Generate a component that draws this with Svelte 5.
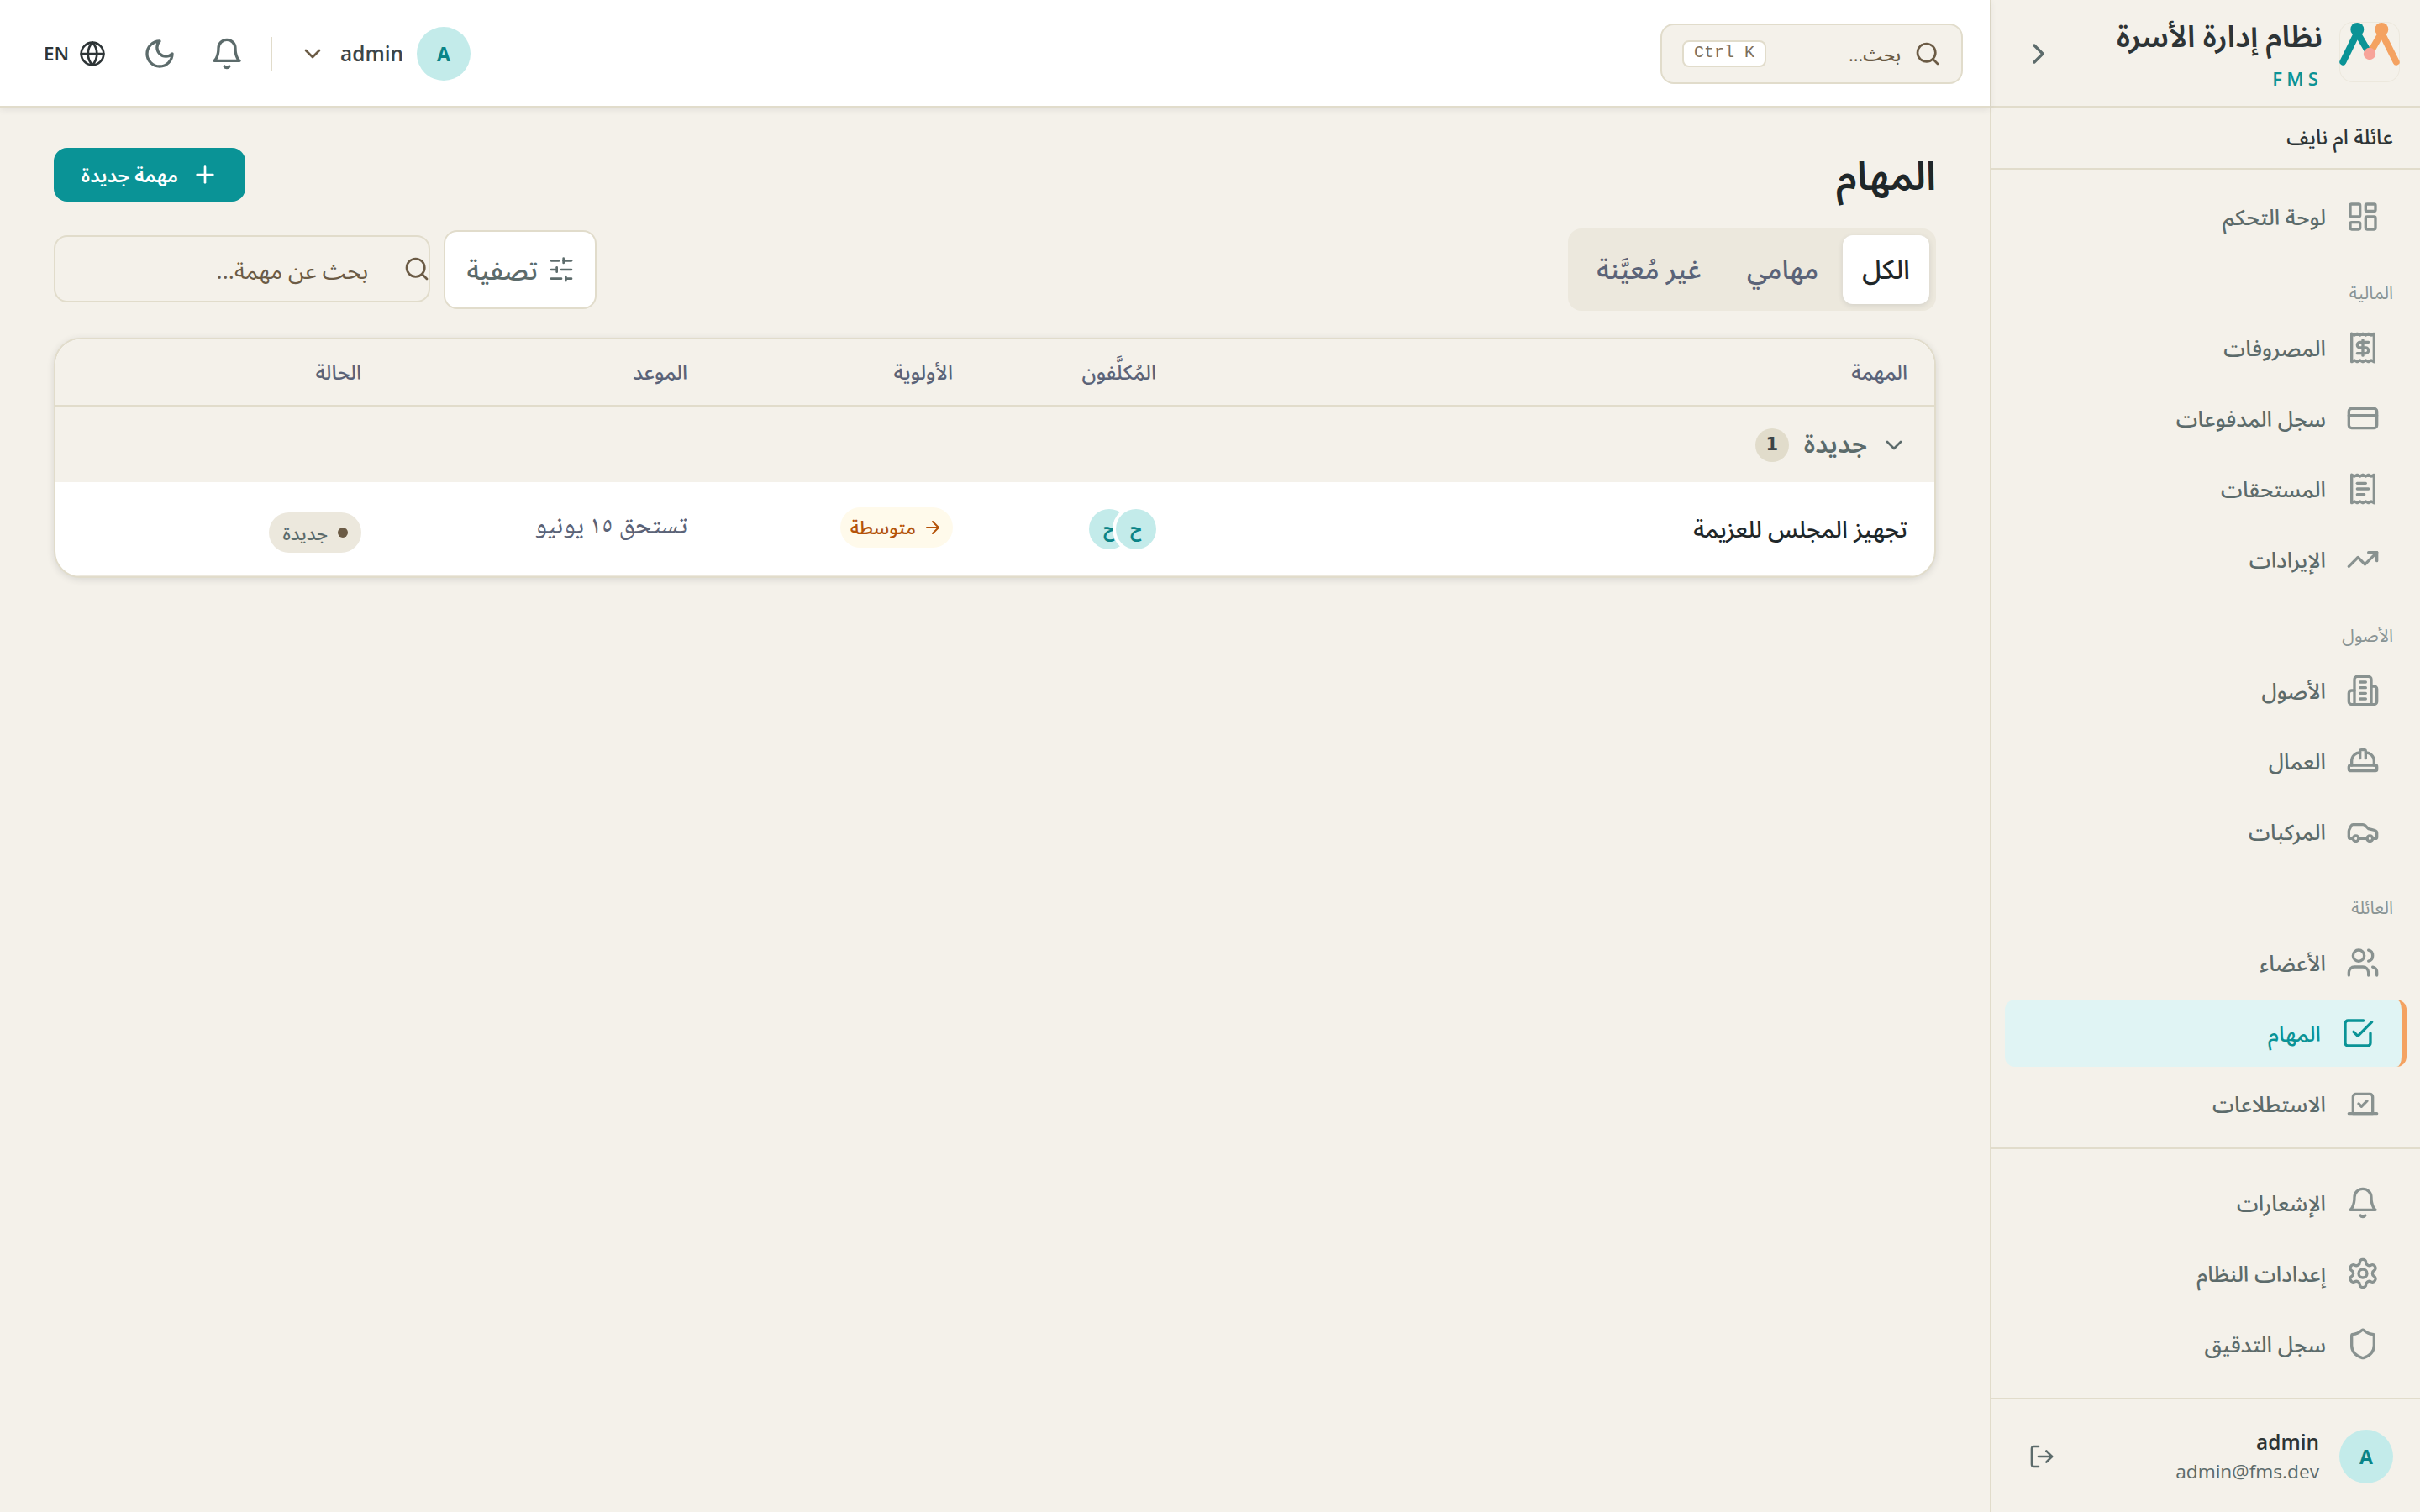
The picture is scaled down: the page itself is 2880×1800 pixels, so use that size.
<script lang="ts">
  const icons: Record<string, string> = {
    dashboard: '<rect width="7" height="9" x="3" y="3" rx="1"/><rect width="7" height="5" x="14" y="3" rx="1"/><rect width="7" height="9" x="14" y="12" rx="1"/><rect width="7" height="5" x="3" y="16" rx="1"/>',
    expenses: '<path d="M4 2v20l2-1 2 1 2-1 2 1 2-1 2 1 2-1 2 1V2l-2 1-2-1-2 1-2-1-2 1-2-1-2 1Z"/><path d="M16 8h-6a2 2 0 1 0 0 4h4a2 2 0 1 1 0 4H8"/><path d="M12 17.5v-11"/>',
    card: '<rect width="20" height="14" x="2" y="5" rx="2"/><path d="M2 10h20"/>',
    dues: '<path d="M4 2v20l2-1 2 1 2-1 2 1 2-1 2 1 2-1 2 1V2l-2 1-2-1-2 1-2-1-2 1-2-1-2 1Z"/><path d="M14 8H8"/><path d="M16 12H8"/><path d="M13 16H8"/>',
    trending: '<path d="m22 7-8.5 8.5-5-5L2 17"/><path d="M16 7h6v6"/>',
    building: '<path d="M6 22V4a2 2 0 0 1 2-2h8a2 2 0 0 1 2 2v18Z"/><path d="M6 12H4a2 2 0 0 0-2 2v6a2 2 0 0 0 2 2h2"/><path d="M18 9h2a2 2 0 0 1 2 2v9a2 2 0 0 1-2 2h-2"/><path d="M10 6h4"/><path d="M10 10h4"/><path d="M10 14h4"/><path d="M10 18h4"/>',
    hardhat: '<path d="M2 18a1 1 0 0 0 1 1h18a1 1 0 0 0 1-1v-2a1 1 0 0 0-1-1H3a1 1 0 0 0-1 1v2z"/><path d="M10 10V5a1 1 0 0 1 1-1h2a1 1 0 0 1 1 1v5"/><path d="M4 15v-3a6 6 0 0 1 6-6"/><path d="M14 6a6 6 0 0 1 6 6v3"/>',
    car: '<path d="M19 17h2c.6 0 1-.4 1-1v-3c0-.9-.7-1.7-1.5-1.9C18.7 10.6 16 10 16 10s-1.3-1.4-2.2-2.3c-.5-.4-1.1-.7-1.8-.7H5c-.6 0-1.1.4-1.4.9l-1.4 2.9A3.7 3.7 0 0 0 2 12v4c0 .6.4 1 1 1h2"/><circle cx="7" cy="17" r="2"/><path d="M9 17h6"/><circle cx="17" cy="17" r="2"/>',
    users: '<path d="M16 21v-2a4 4 0 0 0-4-4H6a4 4 0 0 0-4 4v2"/><circle cx="9" cy="7" r="4"/><path d="M22 21v-2a4 4 0 0 0-3-3.87"/><path d="M16 3.13a4 4 0 0 1 0 7.75"/>',
    tasks: '<path d="m9 11 3 3L22 4"/><path d="M21 12v7a2 2 0 0 1-2 2H5a2 2 0 0 1-2-2V5a2 2 0 0 1 2-2h11"/>',
    vote: '<path d="m9 12 2 2 4-4"/><path d="M5 7c0-1.1.9-2 2-2h10a2 2 0 0 1 2 2v12H5V7Z"/><path d="M22 19H2"/>',
    bell: '<path d="M6 8a6 6 0 0 1 12 0c0 7 3 9 3 9H3s3-2 3-9"/><path d="M10.3 21a1.94 1.94 0 0 0 3.4 0"/>',
    settings: '<path d="M12.22 2h-.44a2 2 0 0 0-2 2v.18a2 2 0 0 1-1 1.73l-.43.25a2 2 0 0 1-2 0l-.15-.08a2 2 0 0 0-2.73.73l-.22.38a2 2 0 0 0 .73 2.73l.15.1a2 2 0 0 1 1 1.72v.51a2 2 0 0 1-1 1.74l-.15.09a2 2 0 0 0-.73 2.73l.22.38a2 2 0 0 0 2.73.73l.15-.08a2 2 0 0 1 2 0l.43.25a2 2 0 0 1 1 1.73V20a2 2 0 0 0 2 2h.44a2 2 0 0 0 2-2v-.18a2 2 0 0 1 1-1.73l.43-.25a2 2 0 0 1 2 0l.15.08a2 2 0 0 0 2.73-.73l.22-.39a2 2 0 0 0-.73-2.73l-.15-.08a2 2 0 0 1-1-1.74v-.5a2 2 0 0 1 1-1.74l.15-.09a2 2 0 0 0 .73-2.73l-.22-.38a2 2 0 0 0-2.73-.73l-.15.08a2 2 0 0 1-2 0l-.43-.25a2 2 0 0 1-1-1.73V4a2 2 0 0 0-2-2z"/><circle cx="12" cy="12" r="3"/>',
    shield: '<path d="M20 13c0 5-3.5 7.5-7.66 8.95a1 1 0 0 1-.67-.01C7.5 20.5 4 18 4 13V6a1 1 0 0 1 1-1c2 0 4.5-1.2 6.24-2.72a1.17 1.17 0 0 1 1.52 0C14.51 3.81 17 5 19 5a1 1 0 0 1 1 1z"/>',
    logout: '<path d="M9 21H5a2 2 0 0 1-2-2V5a2 2 0 0 1 2-2h4"/><path d="m16 17 5-5-5-5"/><path d="M21 12H9"/>',
    search: '<circle cx="11" cy="11" r="8"/><path d="m21 21-4.3-4.3"/>',
    moon: '<path d="M12 3a6 6 0 0 0 9 9 9 9 0 1 1-9-9Z"/>',
    globe: '<circle cx="12" cy="12" r="10"/><path d="M12 2a14.5 14.5 0 0 0 0 20 14.5 14.5 0 0 0 0-20"/><path d="M2 12h20"/>',
    plus: '<path d="M5 12h14"/><path d="M12 5v14"/>',
    sliders: '<path d="M21 4h-7"/><path d="M10 4H3"/><path d="M21 12h-9"/><path d="M8 12H3"/><path d="M21 20h-5"/><path d="M12 20H3"/><path d="M14 2v4"/><path d="M8 10v4"/><path d="M16 18v4"/>',
    down: '<path d="m6 9 6 6 6-6"/>',
    right: '<path d="m9 18 6-6-6-6"/>',
    arrow: '<path d="M5 12h14"/><path d="m12 5 7 7-7 7"/>',
  };

  const groups = [
    { title: "", items: [{ icon: "dashboard", label: "لوحة التحكم" }] },
    {
      title: "المالية",
      items: [
        { icon: "expenses", label: "المصروفات" },
        { icon: "card", label: "سجل المدفوعات" },
        { icon: "dues", label: "المستحقات" },
        { icon: "trending", label: "الإيرادات" },
      ],
    },
    {
      title: "الأصول",
      items: [
        { icon: "building", label: "الأصول" },
        { icon: "hardhat", label: "العمال" },
        { icon: "car", label: "المركبات" },
      ],
    },
    {
      title: "العائلة",
      items: [
        { icon: "users", label: "الأعضاء" },
        { icon: "tasks", label: "المهام" },
        { icon: "vote", label: "الاستطلاعات" },
      ],
    },
  ];

  const systemItems = [
    { icon: "bell", label: "الإشعارات" },
    { icon: "settings", label: "إعدادات النظام" },
    { icon: "shield", label: "سجل التدقيق" },
  ];

  const tabs = ["الكل", "مهامي", "غير مُعيَّنة"];
  const columns = ["المهمة", "المُكلَّفون", "الأولوية", "الموعد", "الحالة"];
  const tasks = [
    { title: "تجهيز المجلس للعزيمة", people: ["ح", "ح"], priority: "متوسطة", due: "تستحق ١٥ يونيو", status: "جديدة" },
  ];

  let active = $state("المهام");
  let tab = $state("الكل");
  let open = $state(true);
</script>

{#snippet icon(name: string, size: number)}
  <svg class="icon" width={size} height={size} viewBox="0 0 24 24">{@html icons[name]}</svg>
{/snippet}

{#snippet navItem(item: { icon: string; label: string })}
  <button class="nav-item" class:active={active === item.label} onclick={() => (active = item.label)}>
    {@render icon(item.icon, 40)}
    <span class="t">{item.label}</span>
  </button>
{/snippet}

<div class="app" dir="rtl">
  <aside class="sidebar">
    <div class="brand">
      <div class="logo">
        <svg width="72" height="72" viewBox="0 0 72 72">
          <path class="leg teal" d="M4.3 47.7 21.3 13 36 38" />
          <path class="leg orange" d="M67.7 47.7 50.3 13 36 38" />
          <circle class="head-teal" cx="21.3" cy="9" r="8" />
          <circle class="head-orange" cx="50.3" cy="9" r="8" />
          <circle class="joint" cx="36" cy="38" r="7.2" />
        </svg>
      </div>
      <div class="brand-text">
        <span class="brand-name t">نظام إدارة الأسرة</span>
        <span class="brand-sub">FMS</span>
      </div>
      <button class="collapse">{@render icon("right", 40)}</button>
    </div>

    <div class="family"><span class="t">عائلة ام نايف</span></div>

    <nav class="nav">
      {#each groups as g}
        {#if g.title}
          <div class="nav-title"><span class="t">{g.title}</span></div>
        {/if}
        <div class="nav-group">
          {#each g.items as item}
            {@render navItem(item)}
          {/each}
        </div>
      {/each}
    </nav>

    <div class="nav-system">
      <div class="nav-group">
        {#each systemItems as item}
          {@render navItem(item)}
        {/each}
      </div>
    </div>

    <div class="account">
      <span class="avatar">A</span>
      <div class="account-text">
        <span class="account-name">admin</span>
        <span class="account-mail">admin@fms.dev</span>
      </div>
      <button class="logout">{@render icon("logout", 32)}</button>
    </div>
  </aside>

  <div class="main">
    <header class="topbar">
      <button class="search">
        {@render icon("search", 32)}
        <span class="search-label t">بحث...</span>
        <kbd dir="ltr">Ctrl K</kbd>
      </button>
      <div class="tools">
        <button class="user">
          <span class="avatar">A</span>
          <span class="user-name">admin</span>
          {@render icon("down", 32)}
        </button>
        <span class="sep"></span>
        <button class="tool">{@render icon("bell", 40)}</button>
        <button class="tool">{@render icon("moon", 40)}</button>
        <button class="lang">
          {@render icon("globe", 32)}
          <span>EN</span>
        </button>
      </div>
    </header>

    <main class="page">
      <div class="page-head">
        <h1><span class="t">المهام</span></h1>
        <button class="btn-new">
          {@render icon("plus", 32)}
          <span class="t">مهمة جديدة</span>
        </button>
      </div>

      <div class="filters">
        <div class="tabs">
          {#each tabs as name}
            <button class="tab" class:selected={tab === name} onclick={() => (tab = name)}><span class="t">{name}</span></button>
          {/each}
        </div>
        <div class="filters-end">
          <button class="btn-filter">
            {@render icon("sliders", 32)}
            <span class="t">تصفية</span>
          </button>
          <label class="find">
            {@render icon("search", 32)}
            <span class="find-hint t">بحث عن مهمة...</span>
          </label>
        </div>
      </div>

      <section class="table">
        <div class="row head">
          {#each columns as c}
            <div class="cell"><span class="t">{c}</span></div>
          {/each}
        </div>
        <button class="group" onclick={() => (open = !open)}>
          {@render icon("down", 32)}
          <span class="group-name t">جديدة</span>
          <span class="count">{tasks.length}</span>
        </button>
        {#if open}
          {#each tasks as task}
            <div class="row task">
              <div class="cell"><span class="task-title t">{task.title}</span></div>
              <div class="cell people">
                {#each task.people as p}
                  <span class="person"><span class="t">{p}</span></span>
                {/each}
              </div>
              <div class="cell">
                <span class="priority">{@render icon("arrow", 24)}<span class="t">{task.priority}</span></span>
              </div>
              <div class="cell"><span class="due t">{task.due}</span></div>
              <div class="cell">
                <span class="status"><i class="dot"></i><span class="t">{task.status}</span></span>
              </div>
            </div>
          {/each}
        {/if}
      </section>
    </main>
  </div>
</div>

<style>
  :global(body) { background: #f4f1ea; }
  .app {
    --sand: #f4f1ea;
    --line: #e1dccb;
    --teal: #0a9396;
    --ink: #2d3436;
    --muted: #5c6b6b;
    --brown: #6b5b45;
    --slate: #5b6378;
    display: flex;
    height: 1800px;
    overflow: hidden;
    background: var(--sand);
    color: var(--ink);
    font-family: "Open Sans", "Noto Sans Arabic", sans-serif;
    font-size: 26px;
    line-height: 1.5;
  }
  button {
    font: inherit;
    color: inherit;
    background: none;
    border: 0;
    padding: 0;
    margin: 0;
    cursor: pointer;
    display: flex;
    align-items: center;
  }
  .icon {
    fill: none;
    stroke: currentColor;
    stroke-width: 2;
    stroke-linecap: round;
    stroke-linejoin: round;
    flex-shrink: 0;
  }
  .t { white-space: nowrap; }

  .sidebar {
    width: 512px;
    flex-shrink: 0;
    display: flex;
    flex-direction: column;
    border-left: 2px solid var(--line);
    box-sizing: border-box;
  }
  .brand {
    height: 128px;
    box-sizing: border-box;
    border-bottom: 2px solid var(--line);
    display: flex;
    align-items: center;
    padding: 0 24px 0 34px;
    flex-shrink: 0;
  }
  .logo {
    width: 72px;
    height: 72px;
    border-radius: 16px;
    box-shadow: inset 0 0 0 1px #ece8dd;
    margin-top: -2px;
    flex-shrink: 0;
  }
  .logo svg { display: block; overflow: visible; }
  .leg { fill: none; stroke-width: 8; stroke-linecap: round; stroke-linejoin: round; }
  .leg.teal { stroke: #0a9396; }
  .leg.orange { stroke: #f4a261; }
  .head-teal { fill: #0a9396; }
  .head-orange { fill: #f4a261; }
  .joint { fill: #f7a399; }
  .brand-text {
    flex: 1;
    display: flex;
    flex-direction: column;
    margin-right: 20px;
  }
  .brand-name { font-size: 36px; font-weight: 600; line-height: 62px; margin-top: -3px; }
  .brand-sub { font-size: 22px; font-weight: 600; line-height: 36px; padding-top: 1px; letter-spacing: 5.2px; color: var(--teal); }
  .collapse { color: var(--muted); width: 60px; justify-content: center; margin-left: -8px; padding-top: 2px; }

  .family {
    height: 74px;
    box-sizing: border-box;
    border-bottom: 2px solid var(--line);
    padding: 0 32px 2px;
    display: flex;
    align-items: center;
    font-size: 24.4px;
    font-weight: 500;
    flex-shrink: 0;
  }
  .nav { flex: 1; padding: 16px 16px 0; min-height: 0; }
  .nav-title {
    height: 76px;
    box-sizing: border-box;
    padding: 32px 16px 0 0;
    line-height: 36px;
    font-size: 21px;
    color: #8a9494;
  }
  .nav-group { display: flex; flex-direction: column; gap: 4px; }
  .nav-item {
    height: 80px;
    padding: 0 32px;
    gap: 24px;
    border-radius: 12px;
    font-size: 25.8px;
    font-weight: 500;
    color: var(--muted);
  }
  .nav-item .icon { opacity: 0.7; }
  .nav-item.active { background: #e0f4f4; color: var(--teal); border-right: 6px solid #f4a261; }
  .nav-item.active .icon { opacity: 1; }
  .nav-system {
    border-top: 2px solid var(--line);
    border-bottom: 2px solid var(--line);
    padding: 24px 16px;
    flex-shrink: 0;
  }
  .account {
    height: 134px;
    display: flex;
    align-items: center;
    padding: 2px 32px 0 0;
    box-sizing: border-box;
    flex-shrink: 0;
  }
  .avatar {
    width: 64px;
    height: 64px;
    border-radius: 50%;
    background: #c3ebea;
    color: #0a8487;
    font-size: 23px;
    font-weight: 700;
    display: flex;
    align-items: center;
    justify-content: center;
    flex-shrink: 0;
  }
  .account-text { flex: 1; margin-right: 24px; display: flex; flex-direction: column; }
  .account-name { font-weight: 600; line-height: 36px; font-size: 24.4px; }
  .account-mail { font-size: 22.7px; line-height: 34px; color: var(--muted); }
  .logout { color: var(--muted); margin-left: 44px; }

  .main { flex: 1; min-width: 0; }
  .topbar {
    height: 128px;
    box-sizing: border-box;
    background: #fff;
    border-bottom: 2px solid var(--line);
    box-shadow: 0 2px 8px rgba(45, 52, 54, 0.1);
    display: flex;
    align-items: center;
    justify-content: space-between;
    padding: 2px 32px 0 52px;
  }
  .search {
    width: 360px;
    height: 72px;
    box-sizing: border-box;
    border: 2px solid var(--line);
    border-radius: 16px;
    background: var(--sand);
    color: var(--brown);
    padding: 0 24px;
    gap: 16px;
  }
  .search-label { flex: 1; text-align: right; font-size: 22px; font-weight: 500; }
  kbd {
    font: 20px/26px "Liberation Mono", monospace;
    height: 32px;
    width: 100px;
    box-sizing: border-box;
    text-align: center;
    background: #fff;
    border: 2px solid var(--line);
    border-radius: 8px;
    color: #7d6f5c;
  }
  .tools { display: flex; align-items: center; }
  .user { color: #3d4547; }
  .user-name { font-weight: 600; margin: 0 16px 0 17px; font-size: 24.4px; }
  .user .icon { color: var(--brown); }
  .sep { width: 2px; height: 40px; background: var(--line); margin: 0 32px; }
  .tool { color: var(--muted); width: 80px; justify-content: center; }
  .sep + .tool { margin-right: -20px; }
  .lang { gap: 12px; margin-right: 24px; font-size: 22.4px; font-weight: 600; }

  .page { padding: 48px 64px; }
  .page-head { display: flex; align-items: center; justify-content: space-between; height: 64px; }
  h1 { margin: 0; font-size: 47px; font-weight: 600; line-height: 64px; color: #1f2729; }
  .btn-new {
    width: 228px;
    height: 64px;
    box-sizing: border-box;
    padding: 0 32px;
    gap: 16px;
    border-radius: 16px;
    background: var(--teal);
    color: #fff;
    font-size: 23px;
    font-weight: 600;
  }
  .filters { display: flex; align-items: center; justify-content: space-between; margin-top: 32px; height: 98px; }
  .tabs {
    display: flex;
    gap: 4px;
    width: 438px;
    height: 98px;
    box-sizing: border-box;
    padding: 8px;
    border-radius: 16px;
    background: #ece8dd;
  }
  .tab { padding: 0 25px 2px; border-radius: 12px; font-size: 32px; font-weight: 500; color: var(--slate); }
  .tab.selected { padding: 0 23px 2px; background: #fff; color: #1f2729; box-shadow: 0 2px 6px rgba(45, 52, 54, 0.12); }
  .filters-end { display: flex; align-items: center; gap: 16px; }
  .btn-filter {
    width: 182px;
    height: 94px;
    box-sizing: border-box;
    padding: 0 24px;
    gap: 12px;
    background: #fff;
    border: 2px solid var(--line);
    border-radius: 16px;
    font-size: 31.6px;
    font-weight: 500;
    color: var(--muted);
  }
  .find {
    width: 448px;
    height: 80px;
    box-sizing: border-box;
    border: 2px solid var(--line);
    border-radius: 16px;
    margin-top: -2px;
    display: flex;
    align-items: center;
    gap: 42px;
    font-size: 27.2px;
    color: var(--brown);
  }
  .find .icon { margin-right: -2px; }
  .find-hint { padding-top: 4px; }

  .table {
    margin-top: 32px;
    border: 2px solid var(--line);
    border-radius: 32px;
    overflow: hidden;
    background: #fff;
    box-shadow: 0 2px 8px rgba(45, 52, 54, 0.14);
  }
  .row { display: grid; grid-template-columns: 894fr 242fr 316fr 388fr 396fr; }
  .cell { padding: 0 32px; display: flex; align-items: center; }
  .head {
    height: 80px;
    box-sizing: border-box;
    background: var(--sand);
    border-bottom: 2px solid var(--line);
    font-size: 24.4px;
    font-weight: 500;
    color: var(--slate);
  }
  .group {
    width: 100%;
    height: 90px;
    padding: 2px 32px 0;
    background: var(--sand);
    color: var(--muted);
  }
  .group-name { font-size: 30px; font-weight: 600; line-height: 42px; margin: -4px 16px 0 18px; }
  .count {
    width: 40px;
    height: 40px;
    border-radius: 50%;
    background: var(--line);
    color: #3d4547;
    font: 700 21px/38px "DejaVu Sans", sans-serif;
    text-align: center;
  }
  .task { height: 112px; box-sizing: border-box; border-bottom: 2px solid #ece8dd; }
  .task-title { font-size: 28px; font-weight: 500; color: #1f2729; }
  .people { padding-top: 2px; }
  .person {
    width: 48px;
    height: 48px;
    border-radius: 50%;
    background: #c3ebea;
    color: #0a8487;
    font-size: 20px;
    font-weight: 700;
    display: flex;
    align-items: center;
    justify-content: center;
    z-index: 1;
    box-shadow: 0 0 0 4px #fff;
  }
  .person + .person { margin-right: -16px; z-index: 0; }
  .priority, .status {
    display: inline-flex;
    align-items: center;
    height: 48px;
    border-radius: 24px;
    font-size: 22px;
    font-weight: 500;
  }
  .priority { width: 134px; box-sizing: border-box; padding: 0 12px; gap: 8px; background: #fffaeb; color: #b45309; margin-top: -2px; font-size: 22.5px; }
  .status { width: 110px; box-sizing: border-box; padding: 0 16px; gap: 12px; background: #ece8dd; color: var(--muted); margin-top: 10px; }
  .dot { width: 12px; height: 12px; border-radius: 50%; background: var(--brown); }
  .due { font-family: "Noto Naskh Arabic", serif; font-size: 30.4px; font-weight: 500; line-height: 42px; color: var(--slate); }
</style>
